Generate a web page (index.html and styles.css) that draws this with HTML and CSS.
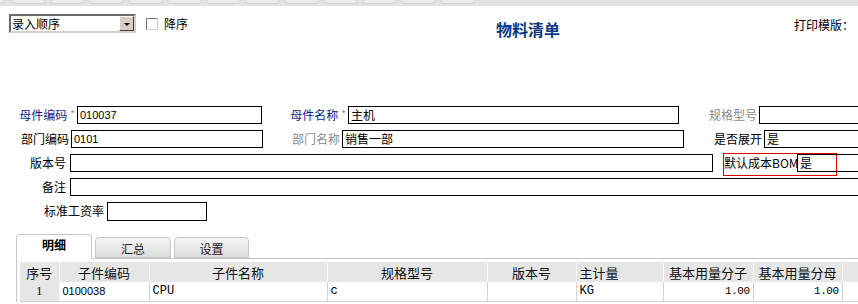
FILE: index.html
```html
<!DOCTYPE html>
<html lang="zh-CN">

<head>
    <meta charset="UTF-8">
    <title>物料清单</title>
    <link rel="stylesheet" href="styles.css">
</head>

<body>
    <div class="toolbar">
        <span class="tb first"></span>
        <span class="tb"></span><span class="tb"></span><span class="tb"></span><span class="tb"></span>
        <span class="tb"></span><span class="tb"></span><span class="tb"></span><span class="tb"></span>
        <span class="tb"></span><span class="tb"></span><span class="tb"></span><span class="tb"></span>
    </div>

    <div class="head">
        <div class="sel"><span class="sel-text">录入顺序</span><span class="sel-btn"><i class="tri"></i></span></div>
        <label class="chk"><span class="box"></span>降序</label>
        <h1 class="title">物料清单</h1>
        <div class="print">打印模版：<span class="psel"></span></div>
    </div>

    <div class="form">
        <div class="row">
            <span class="lb blue w77">母件编码<em>*</em></span>
            <span class="ipt w185">010037</span>
            <span class="lb blue w86">母件名称<em>*</em></span>
            <span class="ipt w331 cjk">主机</span>
            <span class="lb gray w80">规格型号</span>
            <span class="ipt w120"></span>
        </div>
        <div class="row">
            <span class="lb w71">部门编码</span>
            <span class="ipt w192">0101</span>
            <span class="lb gray w79">部门名称</span>
            <span class="ipt w342 cjk">销售一部</span>
            <span class="lb w80">是否展开</span>
            <span class="ipt w120 cjk">是</span>
        </div>
        <div class="row">
            <span class="lb w70">版本号</span>
            <span class="ipt w643"></span>
            <div class="bom">
                <span class="bom-lb">默认成本BOM</span>
                <span class="ipt w100 cjk">是</span>
            </div>
        </div>
        <div class="row">
            <span class="lb w70">备注</span>
            <span class="ipt w800"></span>
        </div>
        <div class="row tall">
            <span class="lb w107">标准工资率</span>
            <span class="ipt w100"></span>
        </div>
    </div>

    <div class="tabs">
        <span class="tab on">明细</span>
        <span class="tab">汇总</span>
        <span class="tab">设置</span>
    </div>

    <div class="grid">
        <table>
            <colgroup>
                <col style="width:39px">
                <col style="width:90px">
                <col style="width:178px">
                <col style="width:160px">
                <col style="width:89px">
                <col style="width:87px">
                <col style="width:90px">
                <col style="width:89px">
                <col style="width:40px">
            </colgroup>
            <thead>
                <tr>
                    <th>序号</th>
                    <th>子件编码</th>
                    <th>子件名称</th>
                    <th>规格型号</th>
                    <th>版本号</th>
                    <th class="left">主计量</th>
                    <th>基本用量分子</th>
                    <th>基本用量分母</th>
                    <th></th>
                </tr>
            </thead>
            <tbody>
                <tr>
                    <td class="no">1</td>
                    <td class="code">0100038</td>
                    <td class="mono">CPU</td>
                    <td class="mono">c</td>
                    <td></td>
                    <td class="mono">KG</td>
                    <td class="num">1.00</td>
                    <td class="num">1.00</td>
                    <td></td>
                </tr>
            </tbody>
        </table>
    </div>
</body>

</html>
```

FILE: styles.css
```css
body {
    margin: 0;
    width: 858px;
    height: 304px;
    overflow: hidden;
    background: #fff;
    font-family: "Noto Sans CJK SC", "Liberation Sans", sans-serif;
    font-size: 12px;
    color: #000;
}

/* 상단 회색 툴바 */
.toolbar {
    height: 6px;
    background: #e3e3e3;
    display: flex;
    gap: 4px;
    overflow: hidden;
}

.tb {
    width: 33px;
    height: 3px;
    margin-top: -1px;
    border: 1px solid #d2d2d2;
    border-radius: 0 0 4px 4px;
    background: #ececec;
    flex: none;
}

.tb.first {
    width: 5px;
    margin-left: -2px;
    margin-right: 2px;
}

.head {
    height: 100px;
    display: flex;
    align-items: flex-start;
    white-space: nowrap;
}

.head > * {
    flex: none;
}

.sel {
    margin: 8px 0 0 9px;
    width: 127px;
    height: 19px;
    box-sizing: border-box;
    border: 2px solid #6a6a6a;
    border-right-color: #d4d0c8;
    border-bottom-color: #d4d0c8;
    display: flex;
    background: #fff;
}

.sel-text {
    flex: 1;
    line-height: 15px;
    padding-left: 1px;
}

.sel-btn {
    width: 15px;
    height: 15px;
    background: #d4d0c8;
    border: 1px solid #fff;
    border-right-color: #404040;
    border-bottom-color: #404040;
    box-sizing: border-box;
    display: flex;
    align-items: center;
    justify-content: center;
}

.tri {
    width: 0;
    height: 0;
    border-left: 3px solid transparent;
    border-right: 3px solid transparent;
    border-top: 3px solid #000;
    margin-top: 1px;
}

.chk {
    margin: 10px 0 0 10px;
    display: flex;
    align-items: center;
    line-height: 16px;
}

.box {
    width: 12px;
    height: 12px;
    box-sizing: border-box;
    border: 1px solid #7a7a7a;
    border-right-color: #d4d0c8;
    border-bottom-color: #d4d0c8;
    margin-right: 6px;
}

.title {
    margin: 13px 0 0 308px;
    font-size: 16px;
    line-height: 20px;
    font-weight: bold;
    color: #0b3781;
}

.print {
    margin: 12px 0 0 234px;
    display: flex;
    line-height: 14px;
}

.psel {
    width: 20px;
    height: 20px;
    margin: 3px 0 0 4px;
    box-sizing: border-box;
    border: 1px solid #6a6a6a;
    border-left-width: 2px;
}

/* 입력 폼 */
.row {
    display: flex;
    height: 18px;
    margin-bottom: 6px;
}

.row.tall {
    height: 19px;
}

.lb {
    text-align: right;
    line-height: 18px;
    padding-right: 2px;
    box-sizing: border-box;
    white-space: nowrap;
    flex: none;
}

.lb em {
    font-style: normal;
    color: #888;
    font-size: 10px;
    margin-left: 3px;
    vertical-align: top;
    line-height: 16px;
}

.blue {
    color: #101c8c;
}

.gray {
    color: #8a8a8a;
}

.ipt {
    height: 18px;
    box-sizing: border-box;
    border: 1px solid #000;
    padding-left: 2px;
    line-height: 16px;
    font-family: "Liberation Sans", sans-serif;
    font-size: 11px;
    flex: none;
    overflow: hidden;
    white-space: nowrap;
}

.ipt.cjk {
    font-family: "Noto Sans CJK SC", sans-serif;
    font-size: 12px;
}

.tall .ipt {
    height: 19px;
}

.w70 { width: 70px; }
.w71 { width: 71px; }
.w77 { width: 77px; }
.w79 { width: 79px; }
.w80 { width: 80px; }
.w86 { width: 86px; }
.w100 { width: 100px; }
.w107 { width: 107px; }
.w120 { width: 120px; }
.w185 { width: 185px; }
.w192 { width: 192px; }
.w331 { width: 331px; }
.w342 { width: 342px; }
.w643 { width: 643px; }
.w800 { width: 800px; }

.lb.w70 { padding-right: 4px; }
.lb.w107 { padding-right: 3px; }

.bom {
    width: 114px;
    height: 23px;
    margin: -1px 0 0 10px;
    box-sizing: border-box;
    border: 1px solid #e00000;
    display: flex;
    flex: none;
}

.bom-lb {
    width: 73px;
    line-height: 18px;
    white-space: nowrap;
    flex: none;
}

/* 탭 */
.tabs {
    display: flex;
    align-items: flex-end;
    gap: 3px;
    margin: 13px 0 0 16px;
    height: 24px;
    position: relative;
    z-index: 1;
}

.tab {
    width: 76px;
    height: 21px;
    box-sizing: border-box;
    border: 1px solid #c6c6c6;
    border-radius: 4px 4px 0 0;
    background: linear-gradient(#f6f6f6, #dcdcdc);
    text-align: center;
    line-height: 22px;
    color: #222;
}

.tab.on {
    height: 25px;
    margin-bottom: -1px;
    background: #fff;
    border-bottom-color: #fff;
    font-weight: bold;
    line-height: 20px;
    color: #000;
}

.tab:last-child {
    width: 75px;
}

.grid {
    margin-left: 16px;
    border-top: 1px solid #c6c6c6;
    border-left: 1px solid #c6c6c6;
    padding: 3px 0 0 3px;
}

table {
    border-collapse: collapse;
    table-layout: fixed;
    width: 862px;
}

th {
    height: 20px;
    padding: 0;
    background: #e6e6e6;
    border-right: 1px solid #fafafa;
    font-weight: normal;
    font-size: 13px;
    line-height: 19px;
    color: #111;
    text-align: center;
}

th.left {
    text-align: left;
    padding-left: 3px;
}

td {
    height: 19px;
    padding: 0 3px;
    border-right: 1px solid #d2d2d2;
    border-bottom: 1px solid #d2d2d2;
    line-height: 19px;
    white-space: nowrap;
}

td.no {
    background: #e6e6e6;
    text-align: center;
    font-family: "Liberation Serif", serif;
    border-right-color: #fafafa;
}

td.code {
    font-family: "Liberation Sans", sans-serif;
    font-size: 11px;
}

td.mono {
    font-family: "Liberation Mono", monospace;
    font-size: 12px;
}

td.num {
    text-align: right;
    font-family: "Liberation Mono", monospace;
    font-size: 11px;
    letter-spacing: -0.5px;
}
```
